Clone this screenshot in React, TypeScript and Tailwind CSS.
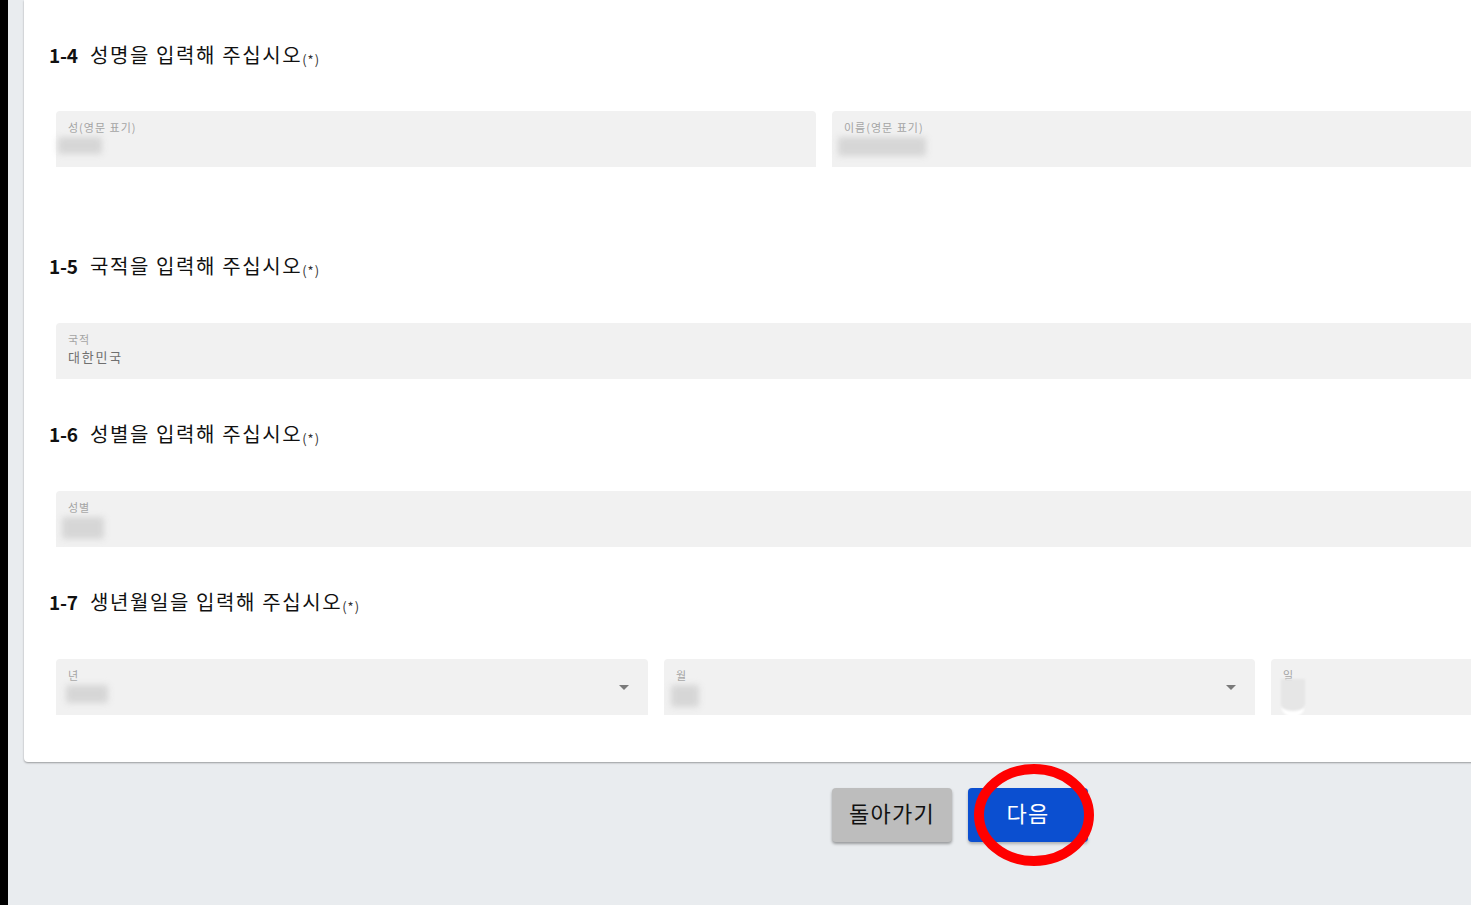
import React from "react";

const FONT = { fontFamily: '"Noto Sans CJK KR", "Noto Sans", sans-serif' };

function Heading({ num, text }: { num: string; text: string }) {
  return (
    <div className="flex items-baseline pl-[25px] h-[24px] leading-[24px] text-[#111]">
      <span className="text-[19px] font-bold tracking-[-0.2px] w-[41px]">{num}</span>
      <span className="text-[20px] tracking-[1.6px]">{text}</span>
      <span className="text-[13px] text-[#333] tracking-[1px] relative top-[2px]">(*)</span>
    </div>
  );
}

function Blur({ w, h, ml = 0 }: { w: number; h: number; ml?: number }) {
  return (
    <div
      className="bg-[#d6d6d6] blur-[3px] rounded-[2px]"
      style={{ width: w, height: h, marginLeft: ml }}
    />
  );
}

function Field({
  label,
  value,
  blur,
  width,
  arrow,
}: {
  label: string;
  value?: string;
  blur?: React.ReactNode;
  width: number;
  arrow?: boolean;
}) {
  return (
    <div
      className="relative h-[56px] bg-[#f1f1f1] rounded-t-[4px] shrink-0 pl-[12px] pt-[9px]"
      style={{ width }}
    >
      <div className="text-[11px] leading-[14px] text-[#a4a4a4] tracking-[1px]">{label}</div>
      {value ? (
        <div className="text-[13px] leading-[18px] mt-[2px] text-[#6f6f6f] tracking-[1.8px]">{value}</div>
      ) : (
        <div className="mt-[3px]">{blur}</div>
      )}
      {arrow && (
        <div className="absolute right-[19px] top-[26px] w-0 h-0 border-l-[5px] border-r-[5px] border-t-[5px] border-l-transparent border-r-transparent border-t-[#7a7a7a]" />
      )}
    </div>
  );
}

export default function App() {
  return (
    <div className="w-[1471px] h-[905px] overflow-hidden flex bg-[#e9ecef]" style={FONT}>
      <div className="w-[8px] bg-black shrink-0" />
      <div className="pl-[16px] flex flex-col shrink-0">
        <div className="w-[1600px] bg-white rounded-bl-[4px] shadow-[0_1px_2px_rgba(0,0,0,0.35)] pt-[43px] pb-[47px]">
          <Heading num="1-4" text="성명을 입력해 주십시오" />
          <div className="flex gap-[16px] ml-[32px] mt-[44px]">
            <Field label="성(영문 표기)" width={760} blur={<Blur w={44} h={17} ml={-10} />} />
            <Field label="이름(영문 표기)" width={760} blur={<Blur w={88} h={19} ml={-6} />} />
          </div>
          <div className="mt-[87px]">
            <Heading num="1-5" text="국적을 입력해 주십시오" />
          </div>
          <div className="flex ml-[32px] mt-[45px]">
            <Field label="국적" value="대한민국" width={1536} />
          </div>
          <div className="mt-[43px]">
            <Heading num="1-6" text="성별을 입력해 주십시오" />
          </div>
          <div className="flex ml-[32px] mt-[45px]">
            <Field label="성별" width={1536} blur={<Blur w={42} h={22} ml={-6} />} />
          </div>
          <div className="mt-[43px]">
            <Heading num="1-7" text="생년월일을 입력해 주십시오" />
          </div>
          <div className="flex gap-[16px] ml-[32px] mt-[45px]">
            <Field label="년" width={592} arrow blur={<Blur w={42} h={18} ml={-2} />} />
            <Field label="월" width={591} arrow blur={<Blur w={28} h={22} ml={-5} />} />
            <Field
              label="일"
              width={592}
              blur={
                <div className="ml-[-2px] mt-[-6px] w-[24px] h-[38px] rounded-b-full bg-[#e6e6e6] border-b-[6px] border-white blur-[1px]" />
              }
            />
          </div>
        </div>
        <div className="relative flex gap-[16px] ml-[808px] mt-[26px]">
          <button className="w-[120px] h-[54px] rounded-[4px] bg-[#bdbdbd] text-[22px] leading-[28px] pb-[6px] tracking-[1.2px] text-[#111] shadow-[0_2px_3px_rgba(0,0,0,0.35)]">
            돌아가기
          </button>
          <button className="w-[120px] h-[54px] rounded-[4px] bg-[#0b4fd0] text-[22px] leading-[28px] pb-[6px] tracking-[1.2px] text-white shadow-[0_2px_3px_rgba(0,0,0,0.25)]">
            다음
          </button>
          <svg
            className="absolute pointer-events-none"
            style={{ left: 139, top: -26 }}
            width="126"
            height="106"
            viewBox="0 0 126 106"
          >
            <ellipse cx="63" cy="53" rx="55" ry="46" fill="none" stroke="#ff0000" strokeWidth="10" />
          </svg>
        </div>
      </div>
    </div>
  );
}
